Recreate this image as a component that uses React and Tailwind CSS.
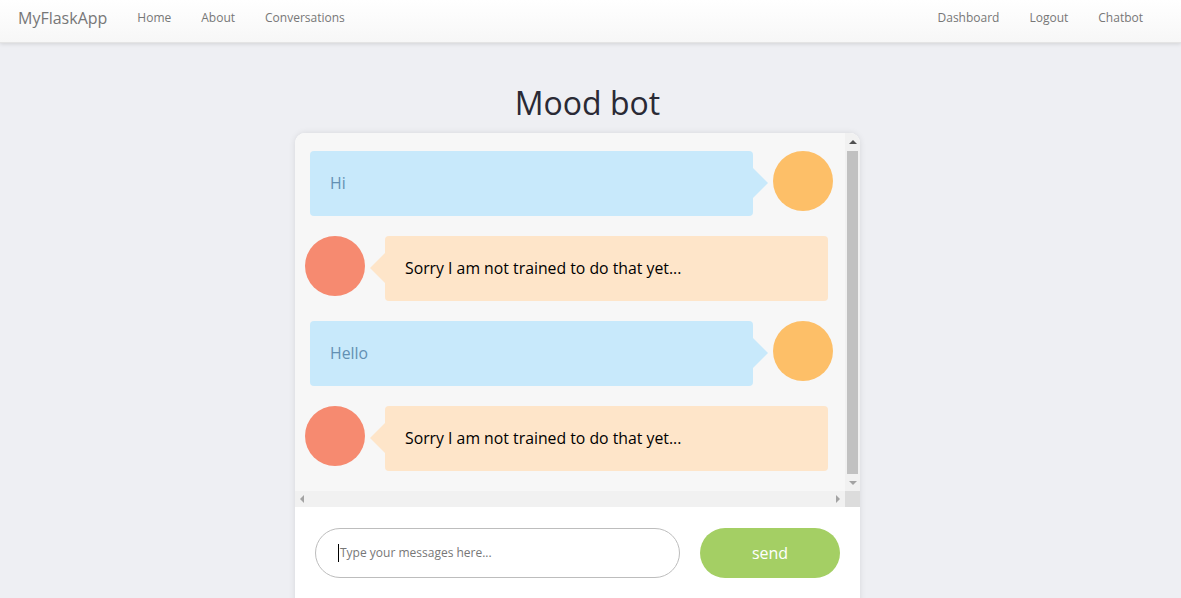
import React from 'react';

const messages = [
  { from: 'user', text: 'Hi' },
  { from: 'bot', text: 'Sorry I am not trained to do that yet...' },
  { from: 'user', text: 'Hello' },
  { from: 'bot', text: 'Sorry I am not trained to do that yet...' },
];

const UserRow = ({ text }) => (
  <div className="flex items-start h-[65px] pl-[15px] pr-[12px]">
    <div className="relative flex-1 h-[65px] bg-[#c8e9fb] rounded-[4px] flex items-center pt-px px-5 text-[15.8px] text-[#6390b3]">
      {text}
      <div className="absolute right-[-15px] top-[17px] w-0 h-0 border-y-[15px] border-y-transparent border-l-[15px] border-l-[#c8e9fb]" />
    </div>
    <div className="ml-5 w-[60px] h-[60px] rounded-full bg-[#fdbf68] shrink-0" />
  </div>
);

const BotRow = ({ text }) => (
  <div className="flex items-start h-[65px] pl-[10px] pr-[17px]">
    <div className="mr-5 w-[60px] h-[60px] rounded-full bg-[#f68a70] shrink-0" />
    <div className="relative flex-1 h-[65px] bg-[#fee5c9] rounded-[4px] flex items-center pt-px px-5 text-[15.8px] text-black">
      {text}
      <div className="absolute left-[-15px] top-[17px] w-0 h-0 border-y-[15px] border-y-transparent border-r-[15px] border-r-[#fee5c9]" />
    </div>
  </div>
);

const App = () => {
  return (
    <div className="h-[598px] overflow-hidden bg-[#eeeff3]" style={{ fontFamily: '"Open Sans", "Noto Sans", sans-serif' }}>
      {/* Navbar */}
      <nav className="h-[43px] flex items-center justify-between pb-[6px] bg-gradient-to-b from-white to-[#f7f7f7] shadow-[0_1px_4px_rgba(0,0,0,0.12)] border-b border-[#e4e4e4]">
        <div className="flex items-center">
          <span className="pl-[18px] pr-[30px] text-[16px] text-[#777]">MyFlaskApp</span>
          <div className="flex gap-[30px] text-[12px] text-[#777]">
            <span>Home</span>
            <span>About</span>
            <span>Conversations</span>
          </div>
        </div>
        <div className="flex gap-[30px] pr-[38px] text-[12px] text-[#777]">
          <span>Dashboard</span>
          <span>Logout</span>
          <span>Chatbot</span>
        </div>
      </nav>

      <h1 className="text-center pr-[6px] text-[32px] text-[#2a2a35] mt-[40px] leading-[40px]">Mood bot</h1>

      {/* Chat card */}
      <div className="ml-[295px] mt-[10px] w-[565px] rounded-t-[10px] overflow-hidden bg-white shadow-[0_0_6px_rgba(0,0,0,0.1)]">
        <div className="flex h-[358px] bg-[#f7f7f7]">
          <div className="flex-1 flex flex-col gap-[20px] pt-[18px]">
            {messages.map((m, i) =>
              m.from === 'user' ? <UserRow key={i} text={m.text} /> : <BotRow key={i} text={m.text} />
            )}
          </div>
          {/* vertical scrollbar */}
          <div className="w-[15px] bg-[#f1f1f1] flex flex-col items-center">
            <div className="h-[18px] flex items-center justify-center">
              <div className="w-0 h-0 border-x-[4px] border-x-transparent border-b-[4px] border-b-[#505050]" />
            </div>
            <div className="w-[11px] flex-1 bg-[#c1c1c1]" />
            <div className="h-[17px] flex items-center justify-center">
              <div className="w-0 h-0 border-x-[4px] border-x-transparent border-t-[4px] border-t-[#a3a3a3]" />
            </div>
          </div>
        </div>
        {/* horizontal scrollbar */}
        <div className="flex h-[16px]">
          <div className="flex-1 bg-[#f1f1f1] flex items-center justify-between px-[5px]">
            <div className="w-0 h-0 border-y-[4px] border-y-transparent border-r-[4px] border-r-[#a3a3a3]" />
            <div className="w-0 h-0 border-y-[4px] border-y-transparent border-l-[4px] border-l-[#a3a3a3]" />
          </div>
          <div className="w-[15px] bg-[#dcdcdc]" />
        </div>
        {/* input */}
        <div className="flex items-center gap-5 px-5 pt-[21px] pb-[30px]">
          <div className="w-[365px] h-[50px] rounded-full border border-[#bdbdbd] flex items-center pl-[22px] text-[12px] text-[#777]">
            <span className="border-l border-black pl-px leading-[18px]">Type your messages here...</span>
          </div>
          <div className="w-[140px] h-[50px] rounded-full bg-[#a4cf64] flex items-center justify-center text-white text-[16px]">
            send
          </div>
        </div>
      </div>
    </div>
  );
};

export default App;
